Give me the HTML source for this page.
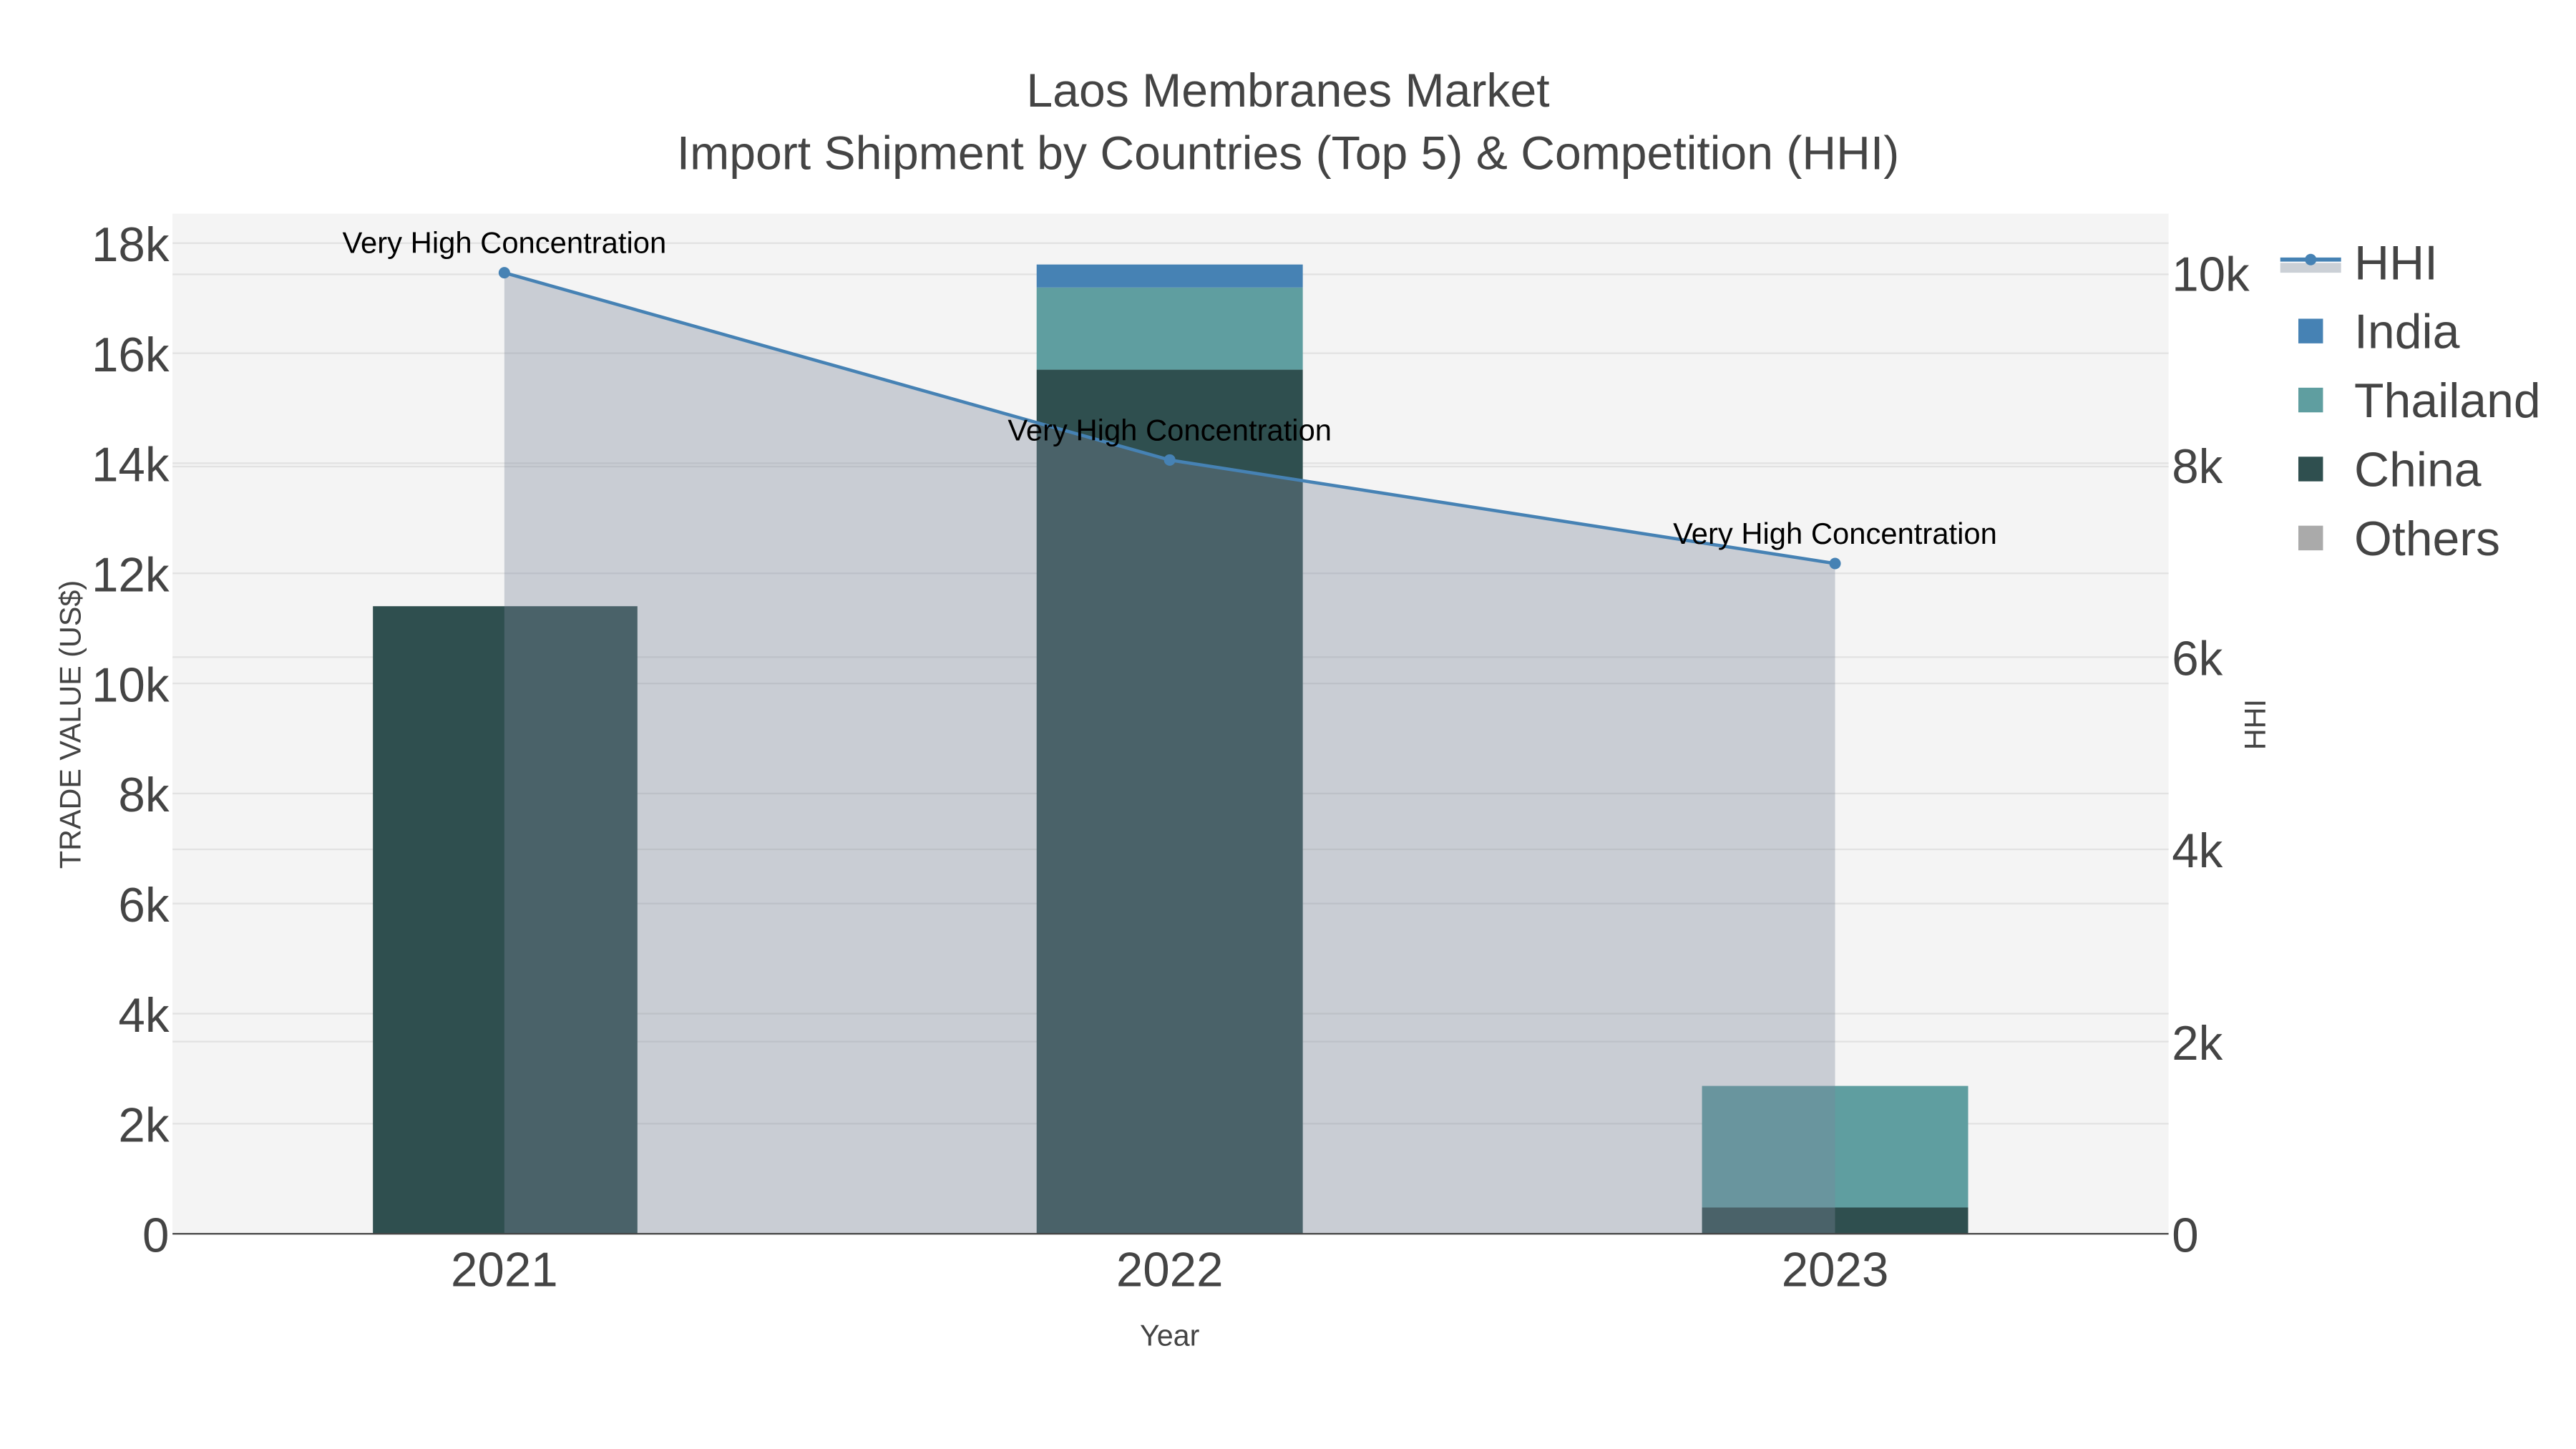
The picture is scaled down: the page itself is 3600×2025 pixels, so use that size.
<!DOCTYPE html>
<html><head><meta charset="utf-8"><style>html,body{margin:0;padding:0;background:#fff}svg{display:block}</style></head>
<body>
<svg width="3600" height="2025" viewBox="0 0 1568 882" preserveAspectRatio="none" xmlns="http://www.w3.org/2000/svg" font-family="Liberation Sans, sans-serif">
<rect width="1568" height="882" fill="#fff"/>
<rect x="105" y="130" width="1215" height="621" fill="#f4f4f4"/>
<g stroke="#e2e2e2" stroke-width="1">
<line x1="105" x2="1320" y1="148" y2="148"/><line x1="105" x2="1320" y1="215" y2="215"/><line x1="105" x2="1320" y1="282" y2="282"/><line x1="105" x2="1320" y1="349" y2="349"/><line x1="105" x2="1320" y1="416" y2="416"/><line x1="105" x2="1320" y1="483" y2="483"/><line x1="105" x2="1320" y1="550" y2="550"/><line x1="105" x2="1320" y1="617" y2="617"/><line x1="105" x2="1320" y1="684" y2="684"/>
<line x1="105" x2="1320" y1="167" y2="167"/><line x1="105" x2="1320" y1="284" y2="284"/><line x1="105" x2="1320" y1="400" y2="400"/><line x1="105" x2="1320" y1="517" y2="517"/><line x1="105" x2="1320" y1="634" y2="634"/>
</g>
<rect x="227" y="369" width="161" height="382" fill="#2f4f4f"/>
<rect x="631" y="225" width="162" height="526" fill="#2f4f4f"/>
<rect x="631" y="175" width="162" height="50" fill="#5f9ea0"/>
<rect x="631" y="161" width="162" height="14" fill="#4682b4"/>
<rect x="1036" y="735" width="162" height="16" fill="#2f4f4f"/>
<rect x="1036" y="661" width="162" height="74" fill="#5f9ea0"/>
<polygon points="307,751 307,166 712,280 1117,343 1117,751" fill="rgb(123,134,154)" fill-opacity="0.355"/>
<polyline points="307,166 712,280 1117,343" fill="none" stroke="#4682b4" stroke-width="2"/>
<circle cx="307" cy="166" r="3.5" fill="#4682b4"/><circle cx="712" cy="280" r="3.5" fill="#4682b4"/><circle cx="1117" cy="343" r="3.5" fill="#4682b4"/>
<line x1="105" x2="1320" y1="751" y2="751" stroke="#444" stroke-width="1"/>
<g font-size="18.2" fill="#000" text-anchor="middle">
<text x="307" y="154">Very High Concentration</text>
<text x="712" y="268">Very High Concentration</text>
<text x="1117" y="331">Very High Concentration</text>
</g>
<g fill="#444" font-size="29.3" text-anchor="end">
<text x="103" y="159">18k</text><text x="103" y="226">16k</text><text x="103" y="293">14k</text><text x="103" y="360">12k</text><text x="103" y="427">10k</text><text x="103" y="494">8k</text><text x="103" y="561">6k</text><text x="103" y="628">4k</text><text x="103" y="695">2k</text><text x="103" y="762">0</text>
</g>
<g fill="#444" font-size="29.3" text-anchor="start">
<text x="1322" y="177">10k</text><text x="1322" y="294">8k</text><text x="1322" y="411">6k</text><text x="1322" y="528">4k</text><text x="1322" y="645">2k</text><text x="1322" y="762">0</text>
</g>
<g fill="#444" font-size="29.3" text-anchor="middle">
<text x="307" y="783">2021</text><text x="712" y="783">2022</text><text x="1117" y="783">2023</text>
</g>
<text x="712" y="819" fill="#444" font-size="18" text-anchor="middle">Year</text>
<text transform="translate(49,441) rotate(-90)" fill="#444" font-size="18" text-anchor="middle">TRADE VALUE (US$)</text>
<text transform="translate(1379,441) rotate(-90)" fill="#444" font-size="18" text-anchor="middle">HHI</text>
<g fill="#444" font-size="28.8" text-anchor="middle">
<text x="784" y="65">Laos Membranes Market</text>
<text x="784" y="103">Import Shipment by Countries (Top 5) &amp; Competition (HHI)</text>
</g>
<rect x="1388" y="160" width="37" height="6" fill="#cbd0d6"/>
<line x1="1388" x2="1425" y1="158" y2="158" stroke="#4682b4" stroke-width="2.5"/>
<circle cx="1406.5" cy="158" r="3.5" fill="#4682b4"/>
<rect x="1399" y="194" width="15" height="15" fill="#4682b4"/>
<rect x="1399" y="236" width="15" height="15" fill="#5f9ea0"/>
<rect x="1399" y="278" width="15" height="15" fill="#2f4f4f"/>
<rect x="1399" y="320" width="15" height="15" fill="#aaaaaa"/>
<g fill="#444" font-size="29.6">
<text x="1433" y="170">HHI</text><text x="1433" y="212">India</text><text x="1433" y="254">Thailand</text><text x="1433" y="296">China</text><text x="1433" y="338">Others</text>
</g>
</svg>
</body></html>
